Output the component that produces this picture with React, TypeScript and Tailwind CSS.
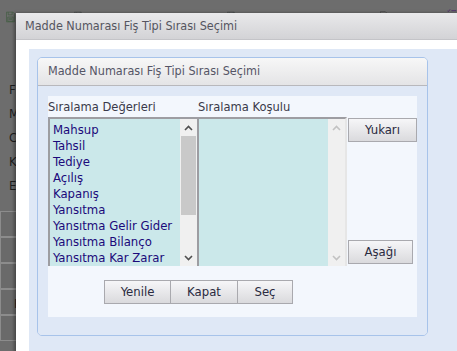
import React from "react";

const items = [
  "Mahsup",
  "Tahsil",
  "Tediye",
  "Açılış",
  "Kapanış",
  "Yansıtma",
  "Yansıtma Gelir Gider",
  "Yansıtma Bilanço",
  "Yansıtma Kar Zarar",
];

function Floppy({ color }: { color: string }) {
  return (
    <svg width="20" height="24" viewBox="0 0 20 24" fill="none" stroke={color} strokeWidth="1.5">
      <path d="M1 1h15l3 3v19H1z" />
      <path d="M5 1v6h9V1" />
      <path d="M4 12h12v10H4z" />
      <path d="M6 15h8M6 18h8" />
    </svg>
  );
}

function Chevron({ up, color }: { up?: boolean; color: string }) {
  return (
    <svg width="9" height="6" viewBox="0 0 9 6" fill="none" stroke={color} strokeWidth="1.6">
      {up ? <path d="M1 5l3.5-3.5L8 5" /> : <path d="M1 1l3.5 3.5L8 1" />}
    </svg>
  );
}

function Btn({ children, className = "" }: { children: React.ReactNode; className?: string }) {
  return (
    <div
      className={
        "flex items-center justify-center h-[24px] border border-[#a9a9ae] bg-gradient-to-b from-[#f6f6f8] to-[#dadadd] text-[13px] text-[#2a2a40] " +
        className
      }
    >
      {children}
    </div>
  );
}

export default function App() {
  return (
    <div
      className="relative w-[457px] h-[351px] overflow-hidden bg-[#6d6d6d]"
      style={{ fontFamily: "'DejaVu Sans Condensed', 'DejaVu Sans', Verdana, sans-serif" }}
    >
      {/* background page */}
      <div className="flex flex-col">
        <div className="flex h-[40px] items-start pt-[5px] pl-[6px] gap-[59px]">
          <Floppy color="#3f5d3f" />
          <Floppy color="#44494a" />
          <div className="w-[60px]" />
          <Floppy color="#44494a" />
          <div className="w-[60px]" />
          <svg width="18" height="22" viewBox="0 0 18 22" fill="none" stroke="#444" strokeWidth="1.5">
            <path d="M1 1h11l5 5v15H1z" />
          </svg>
          <svg width="22" height="14" viewBox="0 0 22 14" fill="none" stroke="#4c2a6a" strokeWidth="2">
            <path d="M1 4l2 2 4-5M10 4h11" />
          </svg>
        </div>
        <div className="flex flex-col pl-[9px] pt-[42px] gap-[8px] text-[13px] text-[#1e1e1e] leading-[16px]">
          <span>F</span>
          <span>M</span>
          <span>C</span>
          <span>K</span>
          <span>E</span>
        </div>
        <div className="flex flex-col mt-[17px]">
          {["", "", "", "H", ""].map((t, i) => (
            <div
              key={i}
              className="h-[26px] w-[40px] border border-[#8c8c8c] bg-[#6a6a6a] text-[13px] text-[#1e1e1e] pl-[13px] pt-[4px]"
            >
              {t}
            </div>
          ))}
        </div>
      </div>

      {/* modal dialog */}
      <div className="absolute left-[16px] top-[13px] w-[460px] h-[340px] flex flex-col bg-white shadow-[-2px_0_3px_rgba(0,0,0,0.35)]">
        <div className="h-[27px] flex items-center pl-[9px] bg-gradient-to-b from-[#e9e9eb] to-[#d3d3d6] border-b border-[#c4c4c8] text-[12.5px] text-[#555560]">
          Madde Numarası Fiş Tipi Sırası Seçimi
        </div>
        <div className="flex-1 pl-[13px] pt-[9px]">
          <div className="h-full bg-[#dfe8f6] pl-[8px] pt-[8px]">
            <div className="w-[391px] h-[279px] border border-[#a7c3ea] rounded-[5px] flex flex-col overflow-hidden">
              <div className="h-[28px] flex items-center pl-[10px] bg-gradient-to-b from-[#f7f7f7] to-[#e4e4e6] border-b border-[#b8b8bc] text-[12.5px] text-[#555566]">
                Madde Numarası Fiş Tipi Sırası Seçimi
              </div>
              <div className="flex-1 bg-[#dfe8f6] pl-[10px] pt-[10px]">
                <div className="w-[369px] h-[221px] bg-[#f3f7fd] flex flex-col">
                  <div className="h-[21px] flex items-center text-[12.8px] text-[#3a3a4a]">
                    <span className="w-[150px]">Sıralama Değerleri</span>
                    <span>Sıralama Koşulu</span>
                  </div>
                  <div className="flex h-[149px]">
                    {/* left list */}
                    <div className="w-[149px] h-full flex border-t-2 border-l-2 border-[#9d9da2] bg-[#cbe8ea]">
                      <div className="flex-1 pl-[3px] pt-[3px] flex flex-col text-[13px] leading-[16px] text-[#1b0a7a] whitespace-nowrap overflow-hidden">
                        {items.map((t) => (
                          <span key={t}>{t}</span>
                        ))}
                      </div>
                      <div className="w-[17px] bg-[#f0f0f0] flex flex-col items-center">
                        <div className="h-[17px] flex items-center justify-center">
                          <Chevron up color="#505050" />
                        </div>
                        <div className="w-[15px] h-[79px] bg-[#c9c9c9]" />
                        <div className="flex-1" />
                        <div className="h-[17px] flex items-center justify-center">
                          <Chevron color="#505050" />
                        </div>
                      </div>
                    </div>
                    {/* right list */}
                    <div className="w-[150px] h-full flex border-t-2 border-l-2 border-r-2 border-[#9d9da2] border-r-[#e6e6e6] bg-[#cbe8ea]">
                      <div className="flex-1" />
                      <div className="w-[17px] bg-[#f0f0f0] flex flex-col items-center justify-between">
                        <div className="h-[17px] flex items-center justify-center">
                          <Chevron up color="#c2c2c2" />
                        </div>
                        <div className="h-[17px] flex items-center justify-center">
                          <Chevron color="#c2c2c2" />
                        </div>
                      </div>
                    </div>
                    {/* side buttons */}
                    <div className="flex flex-col justify-between pl-[1px] pt-[1px]">
                      <Btn className="w-[69px]">Yukarı</Btn>
                      <Btn className="w-[65px] mb-[2px]">Aşağı</Btn>
                    </div>
                  </div>
                  <div className="flex pl-[56px] pt-[14px]">
                    <Btn className="w-[67px]">Yenile</Btn>
                    <Btn className="w-[67px] border-l-0">Kapat</Btn>
                    <Btn className="w-[55px] border-l-0">Seç</Btn>
                  </div>
                </div>
              </div>
            </div>
          </div>
        </div>
      </div>
    </div>
  );
}
